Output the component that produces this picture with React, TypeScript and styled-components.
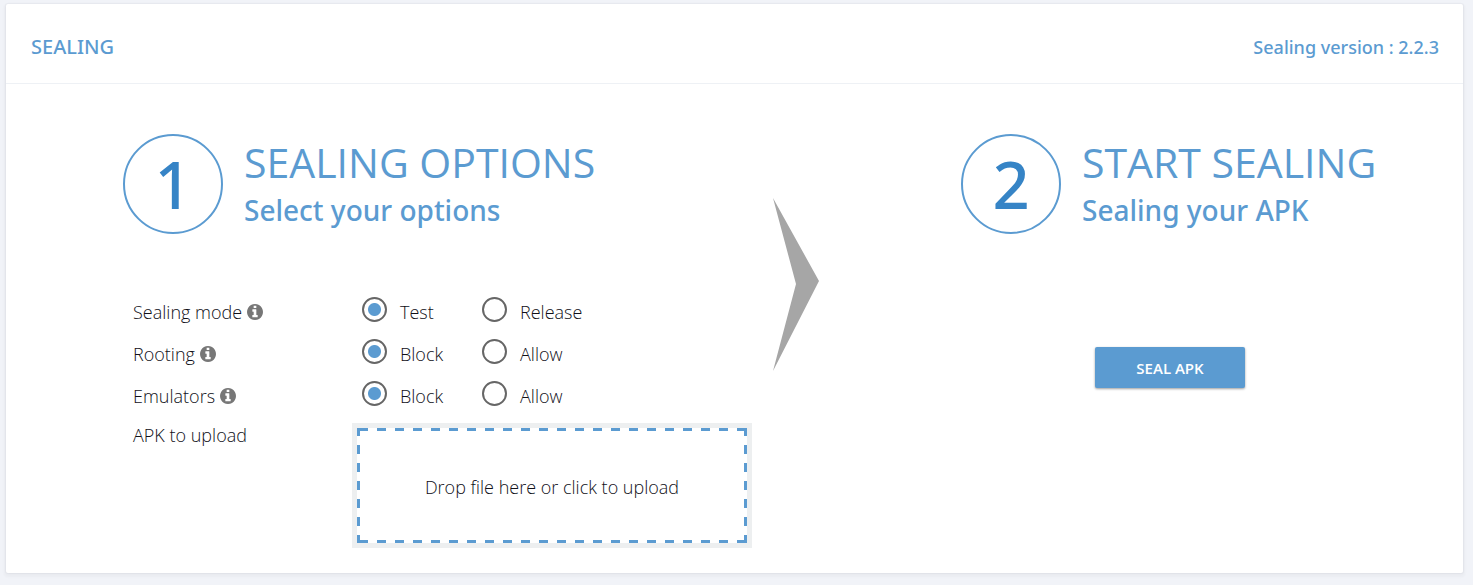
import React, { useState } from 'react';
import styled, { createGlobalStyle } from 'styled-components';

const BLUE = '#5b9bd1';
const HEADING_FONT = '"Noto Sans", "Open Sans", sans-serif';

const GlobalStyle = createGlobalStyle`
  *, *::before, *::after { box-sizing: border-box; }
  body {
    margin: 0;
    background: #f1f3f8;
    color: #101018;
    font-family: "Open Sans", "Noto Sans", sans-serif;
    font-size: 18px;
    font-weight: 300;
    line-height: 24px;
  }
`;

const Card = styled.main`
  margin: 4px 10px 12px 6px;
  background: #fff;
  border-radius: 2px;
  box-shadow: 0 2px 3px 2px rgba(0, 0, 0, 0.03), 0 0 1px 1px rgba(40, 60, 80, 0.04);
`;

const CardHeader = styled.header`
  display: flex;
  align-items: center;
  justify-content: space-between;
  height: 80px;
  padding: 6px 24px 0 25px;
  border-bottom: 1px solid #eef1f5;
  color: ${BLUE};
  font-family: ${HEADING_FONT};
`;

const CardTitle = styled.h1`
  margin: 0;
  font-size: 20px;
  font-weight: 500;
`;

const Version = styled.span`
  font-size: 18px;
  font-weight: 500;
`;

const Steps = styled.div`
  display: grid;
  grid-template-columns: minmax(0, 650fr) 46px minmax(0, 644fr);
  padding: 50px 0 25px 117px;
`;

const StepHeader = styled.div`
  display: flex;
  align-items: flex-start;
  gap: 21px;
`;

const StepNumber = styled.div`
  display: flex;
  flex: none;
  align-items: center;
  justify-content: center;
  width: 100px;
  height: 100px;
  border: 2px solid ${BLUE};
  border-radius: 50%;
  color: #3684c6;
  font-family: ${HEADING_FONT};
  font-size: 65px;
  font-weight: 500;
  line-height: 96px;
`;

const StepTitle = styled.h2`
  margin: 0;
  color: ${BLUE};
  font-size: 41px;
  font-weight: 400;
  line-height: 56px;
  white-space: nowrap;
`;

const StepSubtitle = styled.p`
  margin: 0;
  color: ${BLUE};
  font-family: ${HEADING_FONT};
  font-size: 28px;
  font-weight: 500;
  line-height: 40px;
`;

const Options = styled.form`
  display: grid;
  grid-template-columns: 219px 400px;
  padding: 54px 0 0 10px;
`;

const OptionRow = styled.div`
  display: grid;
  grid-column: 1 / -1;
  grid-template-columns: subgrid;
  height: 42px;
`;

const OptionLabel = styled.span`
  display: flex;
  align-items: center;
  gap: 5px;
  height: 48px;
`;

const InfoIcon = styled.svg`
  width: 16px;
  height: 16px;
  fill: #777;
`;

const Choices = styled.div`
  display: flex;
  padding-left: 10px;
`;

const Choice = styled.label`
  display: flex;
  align-items: center;
  width: 120px;
  height: 48px;
  gap: 13px;
  cursor: pointer;
`;

const Radio = styled.input`
  appearance: none;
  flex: none;
  width: 25px;
  height: 25px;
  margin: 0 0 6px;
  border: 2px solid #666;
  border-radius: 50%;
  cursor: pointer;

  &:checked {
    background: radial-gradient(circle, ${BLUE} 6px, transparent 7px);
  }
`;

const UploadLabel = styled.span`
  padding-top: 9px;
`;

const DropZone = styled.label`
  --dash-x: linear-gradient(90deg, ${BLUE} 50%, transparent 50%);
  --dash-y: linear-gradient(${BLUE} 50%, transparent 50%);
  --solid: linear-gradient(${BLUE}, ${BLUE});
  display: flex;
  align-items: center;
  justify-content: center;
  height: 125px;
  margin-top: 9px;
  padding-top: 2px;
  border: 5px solid #edeff0;
  background:
    var(--solid) left top / 3px 3px no-repeat,
    var(--solid) right top / 3px 3px no-repeat,
    var(--solid) left bottom / 3px 3px no-repeat,
    var(--solid) right bottom / 3px 3px no-repeat,
    var(--dash-x) 2px 0 / 18px 3px repeat-x,
    var(--dash-x) 2px 100% / 18px 3px repeat-x,
    var(--dash-y) 0 -1px / 3px 18px repeat-y,
    var(--dash-y) 100% -1px / 3px 18px repeat-y;
  background-origin: padding-box;
  background-clip: padding-box;
  cursor: pointer;
`;

const FileInput = styled.input`
  position: absolute;
  width: 1px;
  height: 1px;
  overflow: hidden;
  clip-path: inset(50%);
`;

const Arrow = styled.svg`
  width: 46px;
  height: 174px;
  margin-top: 64px;
`;

const StartStep = styled.section`
  padding-left: 142px;
`;

const SealButton = styled.button`
  display: block;
  width: 150px;
  height: 41px;
  margin: 113px 0 0 134px;
  padding: 0;
  border: 0;
  border-radius: 2px;
  background: ${BLUE};
  box-shadow: 0 1px 3px rgba(0, 0, 0, 0.2), 0 1px 2px rgba(0, 0, 0, 0.2);
  color: #fff;
  font-family: inherit;
  font-size: 15px;
  font-weight: 600;
  cursor: pointer;
`;

interface OptionProps {
  name: string;
  label: string;
  choices: string[];
}

function Option({ name, label, choices }: OptionProps) {
  const [value, setValue] = useState(choices[0]);
  return (
    <OptionRow role="radiogroup" aria-labelledby={`${name}-label`}>
      <OptionLabel id={`${name}-label`}>
        {label}
        <InfoIcon viewBox="128 128 1536 1536" aria-hidden>
          <path d="M1152 1376v-160q0-14-9-23t-23-9h-96v-512q0-14-9-23t-23-9h-320q-14 0-23 9t-9 23v160q0 14 9 23t23 9h96v320h-96q-14 0-23 9t-9 23v160q0 14 9 23t23 9h448q14 0 23-9t9-23zM1024 480v-160q0-14-9-23t-23-9h-192q-14 0-23 9t-9 23v160q0 14 9 23t23 9h192q14 0 23-9t9-23zM1664 896q0 209-103 385.500t-279.500 279.500-385.500 103-385.500-103-279.500-279.500-103-385.500 103-385.500 279.500-279.500 385.500-103 385.500 103 279.500 279.500 103 385.500z" />
        </InfoIcon>
      </OptionLabel>
      <Choices>
        {choices.map((choice) => (
          <Choice key={choice}>
            <Radio
              type="radio"
              name={name}
              checked={value === choice}
              onChange={() => setValue(choice)}
            />
            {choice}
          </Choice>
        ))}
      </Choices>
    </OptionRow>
  );
}

interface StepHeadingProps {
  number: number;
  title: string;
  subtitle: string;
}

function StepHeading({ number, title, subtitle }: StepHeadingProps) {
  return (
    <StepHeader>
      <StepNumber>{number}</StepNumber>
      <div>
        <StepTitle>{title}</StepTitle>
        <StepSubtitle>{subtitle}</StepSubtitle>
      </div>
    </StepHeader>
  );
}

export default function App() {
  return (
    <>
      <GlobalStyle />
      <Card>
        <CardHeader>
          <CardTitle>SEALING</CardTitle>
          <Version>Sealing version : 2.2.3</Version>
        </CardHeader>
        <Steps>
          <section>
            <StepHeading number={1} title="SEALING OPTIONS" subtitle="Select your options" />
            <Options>
              <Option name="mode" label="Sealing mode" choices={['Test', 'Release']} />
              <Option name="rooting" label="Rooting" choices={['Block', 'Allow']} />
              <Option name="emulators" label="Emulators" choices={['Block', 'Allow']} />
              <UploadLabel>APK to upload</UploadLabel>
              <DropZone>
                Drop file here or click to upload
                <FileInput type="file" accept=".apk" />
              </DropZone>
            </Options>
          </section>
          <Arrow viewBox="0 0 46 174" aria-hidden>
            <path d="M0 0 L46 83 L0 173 L23 86 Z" fill="#a6a6a6" />
          </Arrow>
          <StartStep>
            <StepHeading number={2} title="START SEALING" subtitle="Sealing your APK" />
            <SealButton type="button">SEAL APK</SealButton>
          </StartStep>
        </Steps>
      </Card>
    </>
  );
}
